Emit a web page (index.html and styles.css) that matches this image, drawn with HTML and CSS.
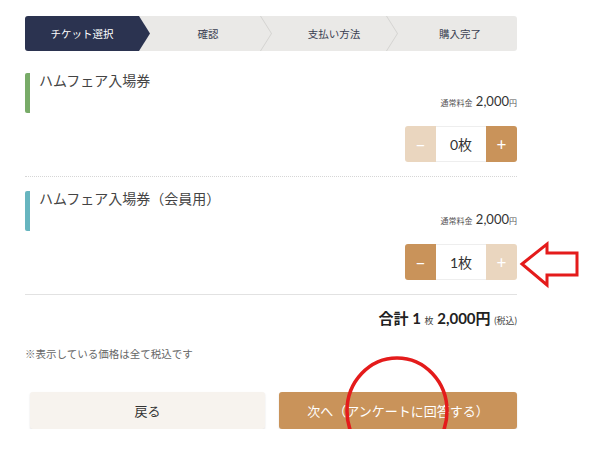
FILE: index.html
```html
<!DOCTYPE html>
<html lang="ja">
<head>
    <meta charset="UTF-8">
    <meta name="viewport" content="width=device-width, initial-scale=1.0">
    <title>チケット選択</title>
    <link rel="stylesheet" href="styles.css">
</head>
<body>
    <div class="page">
        <div class="steps">
            <div class="step actif">チケット選択</div>
            <div class="step">確認</div>
            <div class="step">支払い方法</div>
            <div class="step dernier">購入完了</div>
        </div>

        <div class="tickets">
            <div class="ticket">
                <div class="ticket-tete vert">
                    <div class="ticket-nom">ハムフェア入場券</div>
                    <div class="prix"><span class="petit">通常料金</span> 2,000<span class="petit">円</span></div>
                </div>
                <div class="qte">
                    <button class="qte-btn off">−</button>
                    <div class="qte-val">0枚</div>
                    <button class="qte-btn">+</button>
                </div>
            </div>

            <div class="ticket">
                <div class="ticket-tete bleu">
                    <div class="ticket-nom">ハムフェア入場券（会員用）</div>
                    <div class="prix"><span class="petit">通常料金</span> 2,000<span class="petit">円</span></div>
                </div>
                <div class="qte">
                    <button class="qte-btn">−</button>
                    <div class="qte-val">1枚</div>
                    <button class="qte-btn off">+</button>
                </div>
            </div>
        </div>

        <div class="total">合計 1 <span class="petit">枚</span> 2,000円 <span class="petit fin">(税込)</span></div>

        <p class="note">※表示している価格は全て税込です</p>

        <div class="boutons">
            <button class="btn retour">戻る</button>
            <button class="btn suivant">次へ（アンケートに回答する）</button>
        </div>
    </div>

    <!-- annotations rouges -->
    <svg class="annot" width="600" height="470" viewBox="0 0 600 470">
        <polygon points="522,264 547,244 547,253 577,253 577,275 547,275 547,285" fill="none" stroke="#e41b1b" stroke-width="3" stroke-linejoin="miter"/>
        <ellipse cx="397" cy="411" rx="50" ry="53" fill="none" stroke="#e41b1b" stroke-width="3.5"/>
    </svg>
</body>
</html>
```
FILE: styles.css
```css
body {
    font-family: Lato, "Noto Sans CJK JP", sans-serif;
    margin: 0;
    padding: 16px 0 0;
    background: #fff;
    color: #333;
    position: relative;
}
.page {
    width: 492px;
    margin-left: 25px;
}
.steps {
    display: flex;
    height: 35px;
    background-color: #eae9e7;
    border-radius: 3px;
}
.step {
    flex: 1;
    position: relative;
    display: flex;
    align-items: center;
    justify-content: center;
    font-size: 10.5px;
    color: #3a3f52;
    padding-left: 12px;
}
.step::after {
    content: "";
    position: absolute;
    top: 0;
    right: -7px;
    width: 12px;
    height: 100%;
    background: #d4d3d1;
    clip-path: polygon(0 0, 1px 0, 12px 50%, 1px 100%, 0 100%, 11px 50%);
    z-index: 1;
}
.step.actif {
    background-color: #2b3350;
    color: #fff;
    border-radius: 3px 0 0 3px;
    padding-left: 0;
}
.step.actif::after {
    right: -11px;
    width: 11px;
    background: #2b3350;
    clip-path: polygon(0 0, 100% 50%, 0 100%);
}
.step.dernier::after {
    display: none;
}
.tickets {
    margin-top: 8px;
}
.ticket {
    padding: 14px 0;
    border-bottom: 1px dotted #d6d6d6;
}
.ticket:last-child {
    border-bottom: 1px solid #e2e2e2;
}
.ticket-tete {
    height: 40px;
    border-left: 5px solid #78ab68;
    border-radius: 2px;
    padding-left: 9px;
    display: flex;
    flex-direction: column;
    justify-content: space-between;
}
.ticket-tete.bleu {
    border-left-color: #67b5bf;
}
.ticket-nom {
    font-size: 14px;
    line-height: 18px;
    color: #444;
    margin-top: -1px;
}
.prix {
    align-self: flex-end;
    font-size: 13px;
    line-height: 16px;
    color: #333;
    margin-bottom: 2px;
}
.petit {
    font-size: 8px;
    color: #555;
}
.qte {
    display: flex;
    justify-content: flex-end;
    margin-top: 13px;
}
.qte-btn {
    width: 31px;
    height: 36px;
    border: none;
    background-color: #c9935a;
    color: #fff;
    font-size: 17px;
    font-family: Lato, sans-serif;
    padding: 0;
}
.qte-btn:first-child {
    border-radius: 3px 0 0 3px;
}
.qte-btn:last-child {
    border-radius: 0 3px 3px 0;
}
.qte-btn.off {
    background-color: #ead6bf;
}
.qte-val {
    width: 50px;
    height: 34px;
    border-top: 1px solid #eee;
    border-bottom: 1px solid #eee;
    display: flex;
    align-items: center;
    justify-content: center;
    font-size: 14px;
    color: #333;
}
.total {
    text-align: right;
    font-weight: bold;
    font-size: 15px;
    color: #222;
    margin-top: 12px;
}
.total .petit {
    font-weight: normal;
    font-size: 9px;
    color: #444;
}
.note {
    font-size: 10.5px;
    color: #666;
    margin: 18px 0 0;
}
.boutons {
    display: flex;
    gap: 14px;
    margin-top: 31px;
    padding-left: 5px;
}
.btn {
    height: 37px;
    border: none;
    border-radius: 3px;
    font-family: "Noto Sans CJK JP", sans-serif;
    font-size: 13px;
    box-shadow: 0 1px 2px rgba(0, 0, 0, 0.12);
}
.retour {
    width: 235px;
    background-color: #f7f3ee;
    color: #333;
}
.suivant {
    flex: 1;
    background-color: #c9935a;
    color: #fff;
}
.annot {
    position: absolute;
    top: 0;
    left: 0;
    pointer-events: none;
}
```
